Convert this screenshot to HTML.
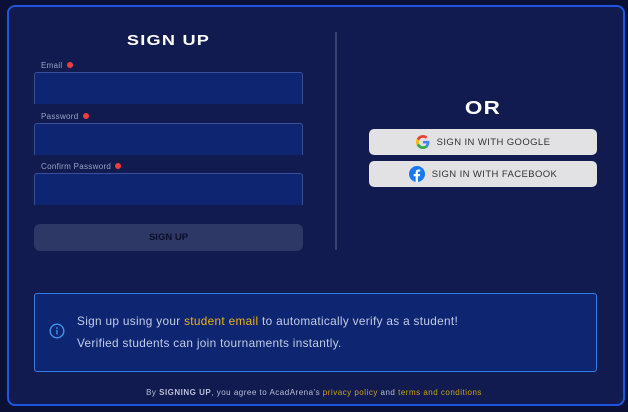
<!DOCTYPE html>
<html><head><style>
*{box-sizing:border-box;margin:0;padding:0}
body{width:628px;height:412px;background:#0b1136;font-family:"Liberation Sans",sans-serif;position:relative;overflow:hidden}
.card{position:absolute;left:7px;top:5px;width:618px;height:401px;border:2px solid #1d55e0;border-radius:8px;background:#111b4f}
.abs{position:absolute}
.h{font-weight:900;color:#fff;letter-spacing:1px;transform:scaleX(1.25);transform-origin:center}
.lbl{font-size:8px;color:#9aa2c4;letter-spacing:.3px}
.dot{display:inline-block;width:6px;height:6px;border-radius:50%;background:#ef3d3d;margin-left:4px;vertical-align:0}
.inp{position:absolute;left:34px;width:269px;height:32px;background:#0e2672;border:1px solid #3a4f9c;border-bottom:none;border-radius:3px 3px 0 0}
.btn{position:absolute;left:369px;width:228px;height:26px;background:#e2e2e4;border-radius:5px;font-size:9.5px;color:#333;display:flex;align-items:center;justify-content:center;letter-spacing:.4px}
.info{font-size:11.8px;color:#c3cbe6;letter-spacing:.32px}
</style></head><body>
<div class="card"></div>
<div class="abs h" style="left:34px;width:269px;top:33px;text-align:center;font-size:14.5px">SIGN UP</div>
<div class="abs lbl" style="left:41px;top:61px">Email<span class="dot"></span></div>
<div class="inp" style="top:72px"></div>
<div class="abs lbl" style="left:41px;top:112px">Password<span class="dot"></span></div>
<div class="inp" style="top:123px"></div>
<div class="abs lbl" style="left:41px;top:162px">Confirm Password<span class="dot"></span></div>
<div class="inp" style="top:173px"></div>
<div class="abs" style="left:34px;top:224px;width:269px;height:27px;background:#2e3866;border-radius:6px;font-size:9.5px;font-weight:bold;color:#0b0f26;text-align:center;line-height:27px">SIGN UP</div>
<div class="abs" style="left:335px;top:32px;width:2px;height:218px;background:#3b4470"></div>
<div class="abs h" style="left:369px;width:228px;top:98px;text-align:center;font-size:18px">OR</div>
<div class="btn" style="top:129px"><svg width="14" height="14" viewBox="0 0 48 48" style="margin-right:7px"><path fill="#EA4335" d="M24 9.5c3.5 0 6.6 1.2 9 3.5l6.7-6.7C35.6 2.4 30.2 0 24 0 14.6 0 6.6 5.4 2.6 13.2l7.8 6.1C12.3 13.6 17.6 9.5 24 9.5z"/><path fill="#4285F4" d="M46.1 24.5c0-1.6-.1-3.1-.4-4.5H24v9h12.4c-.5 2.9-2.2 5.3-4.6 7l7.5 5.8c4.4-4 6.8-10 6.8-17.3z"/><path fill="#FBBC05" d="M10.5 28.6c-.5-1.4-.8-3-.8-4.6s.3-3.2.8-4.6l-7.9-6.1C.9 16.6 0 20.2 0 24s.9 7.4 2.6 10.7l7.9-6.1z"/><path fill="#34A853" d="M24 48c6.5 0 11.9-2.1 15.9-5.8l-7.5-5.8c-2.1 1.4-4.8 2.3-8.4 2.3-6.4 0-11.7-4.1-13.6-9.8l-7.9 6.1C6.6 42.6 14.6 48 24 48z"/></svg>SIGN IN WITH GOOGLE</div>
<div class="btn" style="top:161px"><svg width="16" height="16" viewBox="0 0 24 24" style="margin-right:7px"><circle cx="12" cy="12" r="12" fill="#1877F2"/><path fill="#fff" d="M13.4 24v-8.6h2.9l.4-3.4h-3.3V9.9c0-1 .3-1.6 1.7-1.6h1.8v-3c-.3 0-1.4-.1-2.6-.1-2.6 0-4.3 1.6-4.3 4.4V12H7v3.4h3v8.6z"/></svg>SIGN IN WITH FACEBOOK</div>
<div class="abs" style="left:34px;top:293px;width:563px;height:79px;background:#0e2672;border:1px solid #2f7fe6;border-radius:3px"></div>
<svg class="abs" style="left:49px;top:323px" width="16" height="16" viewBox="0 0 16 16"><circle cx="8" cy="8" r="6.8" fill="none" stroke="#3b96ec" stroke-width="1.4"/><rect x="7.3" y="7" width="1.4" height="4.5" fill="#3b96ec"/><circle cx="8" cy="5" r=".9" fill="#3b96ec"/></svg>
<div class="abs info" style="left:77px;top:314px">Sign up using your <span style="color:#e8b417">student email</span> to automatically verify as a student!</div>
<div class="abs info" style="left:77px;top:336px">Verified students can join tournaments instantly.</div>
<div class="abs" style="left:0;width:628px;top:388px;text-align:center;font-size:8px;letter-spacing:.5px;color:#b9bfd6">By <b>SIGNING UP</b>, you agree to AcadArena's <span style="color:#c9a21c">privacy policy</span> and <span style="color:#c9a21c">terms and conditions</span></div>
</body></html>
